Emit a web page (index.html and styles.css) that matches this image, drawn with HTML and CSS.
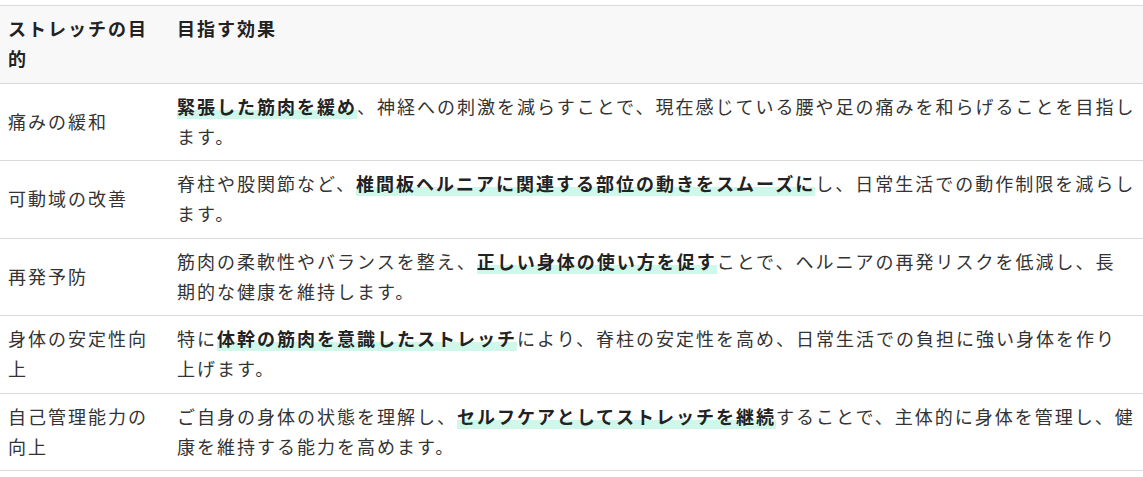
FILE: index.html
```html
<!DOCTYPE html>
<html lang="ja">
<head>
<meta charset="utf-8">
<title>ストレッチの目的</title>
<link rel="stylesheet" href="styles.css">
</head>
<body>
<table class="purpose-table">
  <colgroup>
    <col class="col-purpose">
    <col class="col-effect">
  </colgroup>
  <thead>
    <tr>
      <th>ストレッチの目的</th>
      <th>目指す効果</th>
    </tr>
  </thead>
  <tbody>
    <tr>
      <td>痛みの緩和</td>
      <td><strong class="marker">緊張した筋肉を緩め</strong>、神経への刺激を減らすことで、現在感じている腰や足の痛みを和らげることを目指します。</td>
    </tr>
    <tr>
      <td>可動域の改善</td>
      <td>脊柱や股関節など、<strong class="marker">椎間板ヘルニアに関連する部位の動きをスムーズに</strong>し、日常生活での動作制限を減らします。</td>
    </tr>
    <tr>
      <td>再発予防</td>
      <td>筋肉の柔軟性やバランスを整え、<strong class="marker">正しい身体の使い方を促す</strong>ことで、ヘルニアの再発リスクを低減し、長<span class="keep">期的</span>な健康を維持します。</td>
    </tr>
    <tr>
      <td>身体の安定性向上</td>
      <td>特に<strong class="marker">体幹の筋肉を意識したストレッチ</strong>により、脊柱の安定性を高め、日常生活での負担に強い身体を作り<span class="keep">上げ</span>ます。</td>
    </tr>
    <tr>
      <td>自己管理能力の向上</td>
      <td>ご自身の身体の状態を理解し、<strong class="marker">セルフケアとしてストレッチを継続</strong>することで、主体的に身体を管理し、健康を維持する能力を高めます。</td>
    </tr>
  </tbody>
</table>
</body>
</html>
```

FILE: styles.css
```css
html, body {
  margin: 0;
  padding: 0;
  background: #ffffff;
}

body {
  font-family: "Noto Sans CJK JP", "Noto Sans", sans-serif;
  font-size: 18px;
  color: #333333;
}

.purpose-table {
  width: 1143px;
  margin-top: 5px;
  border-collapse: collapse;
  table-layout: fixed;
  letter-spacing: 2px;
  line-height: 30.25px;
}

.col-purpose {
  width: 169px;
}

.purpose-table th,
.purpose-table td {
  padding: 7px 4px 9px 8px;
  border-top: 1px solid #d9d9d9;
  border-bottom: 1px solid #d9d9d9;
  text-align: left;
}

.purpose-table th {
  background: #f8f8f8;
  font-weight: 700;
  color: #222222;
  vertical-align: top;
}

.purpose-table td {
  font-weight: 400;
  vertical-align: middle;
}

.marker {
  font-weight: 700;
  color: #222222;
  background: linear-gradient(transparent 66%, #cff7ea 66%);
}

.keep {
  white-space: nowrap;
}
```
